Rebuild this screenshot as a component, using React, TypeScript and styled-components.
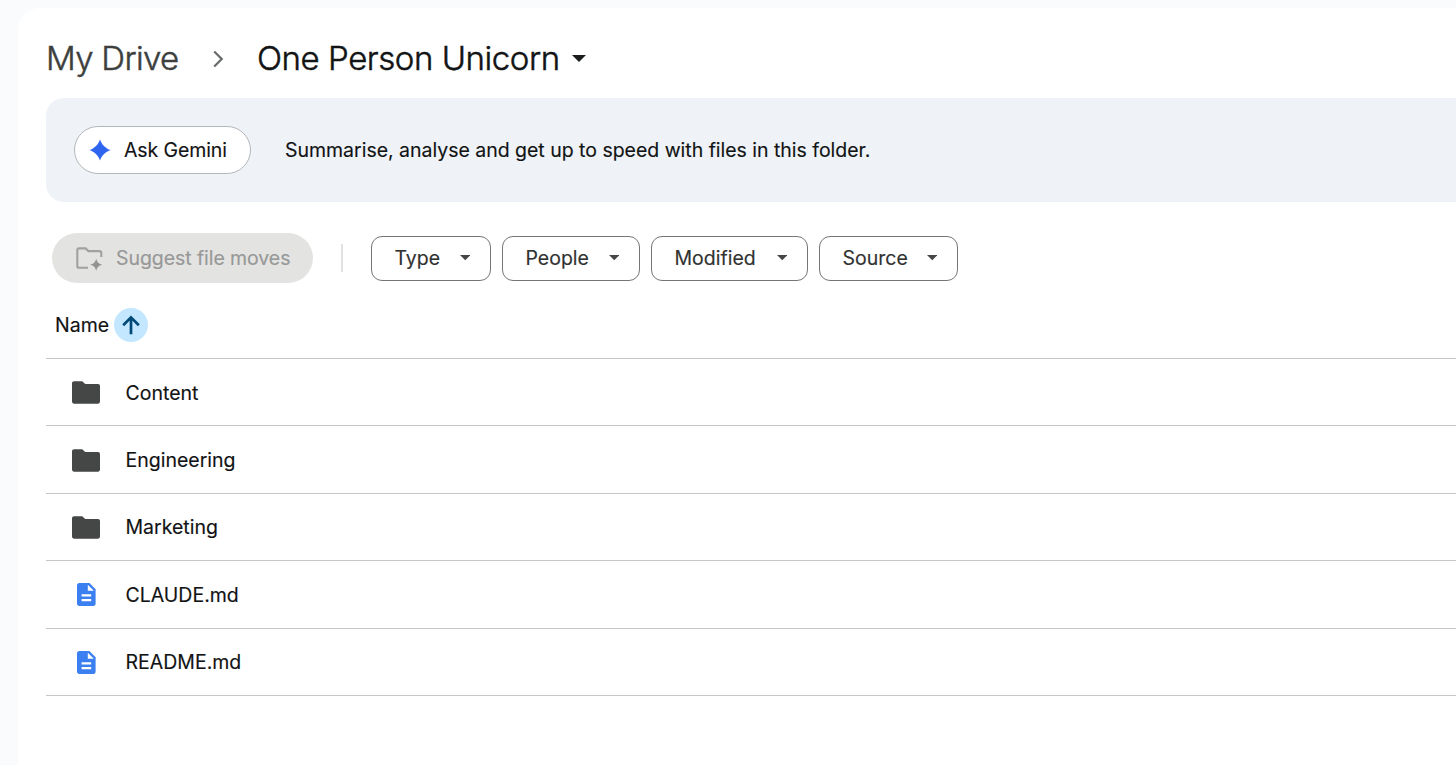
import { ReactNode } from "react";
import styled, { createGlobalStyle } from "styled-components";

const GlobalStyle = createGlobalStyle`
    * {
        box-sizing: border-box;
    }
    body {
        margin: 0;
        overflow: hidden;
        background: #f9fbfd;
        font-family: Inter, sans-serif;
        font-size: 19.5px;
        color: #121314;
        -webkit-text-stroke: 0.15px currentColor;
    }
    button {
        font: inherit;
        color: inherit;
        margin: 0;
    }
    svg {
        display: block;
        flex: none;
    }
`;

const Page = styled.div`
    height: 765px;
    padding: 8px 0 0 18px;
`;

const Panel = styled.main`
    height: 100%;
    padding: 25px 0 0 28px;
    border-radius: 22px 0 0 0;
    background: #fff;
`;

const Breadcrumb = styled.nav`
    display: flex;
    align-items: center;
    height: 50px;
    margin-bottom: 15px;
`;

const Crumb = styled.span<{ $current?: boolean; $width: number }>`
    width: ${p => p.$width}px;
    font-size: 33px;
    font-weight: 300;
    line-height: 50px;
    letter-spacing: ${p => p.$current ? '-0.45px' : '-0.7px'};
    white-space: nowrap;
    -webkit-text-stroke: 0.5px currentColor;
    color: ${p => p.$current ? '#121314' : '#3c3f3e'};
`;

const CrumbSeparator = styled.svg`
    margin: 1px 33px 0 32px;
`;

const Banner = styled.section`
    display: flex;
    align-items: center;
    height: 104px;
    padding: 0 0 1px 28px;
    border-radius: 18px 0 0 18px;
    background: #eff3f8;
`;

const GeminiButton = styled.button`
    display: flex;
    align-items: center;
    gap: 13px;
    width: 177px;
    height: 48px;
    padding: 0 0 0 14px;
    border: 1px solid #b4b7ba;
    border-radius: 24px;
    background: #fff;
    letter-spacing: -0.1px;
`;

const BannerText = styled.p`
    margin: 0 0 0 34px;
    letter-spacing: -0.02px;
    white-space: nowrap;
`;

const Toolbar = styled.div`
    display: flex;
    align-items: center;
    height: 50px;
    margin-top: 31px;
    padding-left: 6px;
`;

const SuggestButton = styled.button`
    display: flex;
    align-items: center;
    gap: 12px;
    width: 261px;
    height: 50px;
    padding: 0 0 0 24px;
    border: 0;
    border-radius: 25px;
    background: #e3e3e1;
    color: #979897;
    letter-spacing: -0.07px;
    white-space: nowrap;
`;

const Divider = styled.span`
    width: 2px;
    height: 28px;
    margin: 0 28px;
    background: #e0e2e2;
`;

const Filters = styled.div`
    display: flex;
    gap: 11px;
`;

const FilterChip = styled.button<{ $width: number }>`
    display: flex;
    align-items: center;
    justify-content: space-between;
    width: ${p => p.$width}px;
    height: 45px;
    padding: 0 20px 0 22.5px;
    border: 1px solid #747775;
    border-radius: 11px;
    background: #fff;
    color: #303231;
`;

const ListHeader = styled.div`
    display: flex;
    align-items: center;
    gap: 5px;
    height: 76px;
    padding: 8px 0 0 9px;
    border-bottom: 1px solid #c4c7c5;
`;

const SortBadge = styled.span`
    display: grid;
    place-items: center;
    width: 34px;
    height: 34px;
    border-radius: 50%;
    background: #c2e7ff;
`;

const FileRow = styled.div`
    display: flex;
    align-items: center;
    height: 67.4px;
    padding-top: 1px;
    border-bottom: 1px solid #c4c7c5;
`;

const FileIcon = styled.span`
    display: grid;
    place-items: center;
    width: 80px;
`;

const FileName = styled.span`
    margin-left: -0.5px;
`;

const Caret = ({ size, color }: { size: number, color: string }) => (
    <svg width={size} height={size / 2} viewBox="0 0 10 5" fill={color}>
        <path d="M0 0h10L5 5z" />
    </svg>
)

const Spark = () => (
    <svg width="22" height="22" viewBox="0 0 22 22" fill="#2f65ee">
        <path d="M11 0.4C12.6 5.4 16.6 9.4 21.6 11C16.6 12.6 12.6 16.6 11 21.6C9.4 16.6 5.4 12.6 0.4 11C5.4 9.4 9.4 5.4 11 0.4Z" />
    </svg>
)

const FolderMoveIcon = () => (
    <svg width="28" height="26" viewBox="0 0 28 26">
        <path d="M12 22.8H3.2C2.2 22.8 1.3 22.1 1.3 21V5.2C1.3 4.1 2.1 3.4 3.2 3.4H9.6L12.4 6.1H23.4C24.6 6.1 25.3 6.8 25.3 7.9V12" fill="none" stroke="#a0a2a1" strokeWidth="2.1" />
        <path d="M20.2 13.8C21.2 17.4 22.6 18.8 26.2 19.8C22.6 20.8 21.2 22.2 20.2 25.8C19.2 22.2 17.8 20.8 14.2 19.8C17.8 18.8 19.2 17.4 20.2 13.8Z" fill="#929493" />
    </svg>
)

const FolderIcon = () => (
    <svg width="28" height="23" viewBox="0 0 28 23" fill="#444746">
        <path d="M2.2 0.3H10.2L13.2 3.1H26C27.2 3.1 28 4 28 5.2V20.6C28 21.8 27.2 22.7 26 22.7H2.2C0.9 22.7 0 21.8 0 20.6V2.4C0 1.2 0.9 0.3 2.2 0.3Z" />
    </svg>
)

const DocIcon = () => (
    <svg width="19" height="23" viewBox="0 0 19 23">
        <path d="M2.3 0H12.4L18.6 6.2V20.8C18.6 22 17.7 23 16.4 23H2.3C1 23 0 22 0 20.8V2.2C0 1 1 0 2.3 0Z" fill="#3b7ff0" />
        <path d="M10.8 1.8V7.7H16.8Z" fill="#fff" />
        <path d="M4.6 11.2H14.2V13.5H4.6ZM4.6 16H14.2V18.3H4.6Z" fill="#fff" />
    </svg>
)

const filters = [
    { label: 'Type', width: 120 },
    { label: 'People', width: 138 },
    { label: 'Modified', width: 157 },
    { label: 'Source', width: 139 },
]

const files: { name: string, icon: ReactNode }[] = [
    { name: 'Content', icon: <FolderIcon /> },
    { name: 'Engineering', icon: <FolderIcon /> },
    { name: 'Marketing', icon: <FolderIcon /> },
    { name: 'CLAUDE.md', icon: <DocIcon /> },
    { name: 'README.md', icon: <DocIcon /> },
]

export default function App() {
    return (
        <Page>
            <GlobalStyle />
            <Panel>
                <Breadcrumb>
                    <Crumb $width={134}>My Drive</Crumb>
                    <CrumbSeparator width="12" height="18" viewBox="0 0 12 18" fill="none" stroke="#6a6c6b" strokeWidth="2.3">
                        <path d="M2.2 1.5L9.7 9L2.2 16.5" />
                    </CrumbSeparator>
                    <Crumb $current $width={315}>One Person Unicorn</Crumb>
                    <Caret size={14} color="#1b1c1d" />
                </Breadcrumb>
                <Banner>
                    <GeminiButton><Spark />Ask Gemini</GeminiButton>
                    <BannerText>Summarise, analyse and get up to speed with files in this folder.</BannerText>
                </Banner>
                <Toolbar>
                    <SuggestButton disabled><FolderMoveIcon />Suggest file moves</SuggestButton>
                    <Divider />
                    <Filters>
                        {filters.map(f => (
                            <FilterChip key={f.label} $width={f.width}>
                                {f.label}
                                <Caret size={10.5} color="#444746" />
                            </FilterChip>
                        ))}
                    </Filters>
                </Toolbar>
                <ListHeader>
                    Name
                    <SortBadge>
                        <svg width="18" height="20" viewBox="0 0 18 20" fill="none" stroke="#004a77" strokeWidth="2.7">
                            <path d="M9 19.3V2.6M1.2 10.2L9 2.4L16.8 10.2" />
                        </svg>
                    </SortBadge>
                </ListHeader>
                {files.map(f => (
                    <FileRow key={f.name}>
                        <FileIcon>{f.icon}</FileIcon>
                        <FileName>{f.name}</FileName>
                    </FileRow>
                ))}
            </Panel>
        </Page>
    );
}
